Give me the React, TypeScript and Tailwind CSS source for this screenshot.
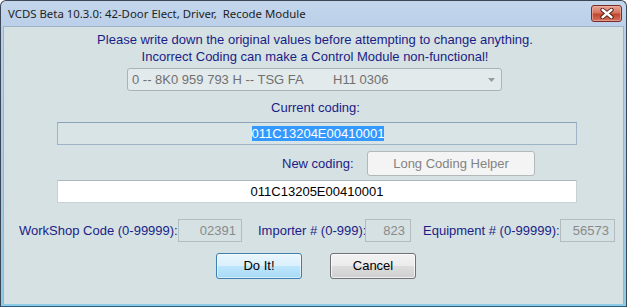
import React from "react";

const ui = { fontFamily: '"Liberation Sans", Arial, sans-serif' };
const title = { fontFamily: '"Noto Sans", "Open Sans", sans-serif' };

function Field({ value, className = "" }: { value: string; className?: string }) {
  return (
    <div
      className={`h-[23px] border border-[#b4bcbf] bg-[#d5e1e3] text-[#8a8a8a] text-[13px] leading-[21px] text-right pr-[5px] ${className}`}
    >
      {value}
    </div>
  );
}

function WinButton({ label, primary }: { label: string; primary?: boolean }) {
  return (
    <button
      className={
        primary
          ? "w-[86px] h-[26px] rounded-[3px] border border-[#3c7fb1] bg-[linear-gradient(#eaf6fd_0%,#d9f0fc_50%,#bee6fd_50%,#a7d9f5_100%)] text-[13px] text-black shadow-[inset_0_0_0_1px_#fff8]"
          : "w-[86px] h-[26px] rounded-[3px] border border-[#707070] bg-[linear-gradient(#f2f2f2_0%,#ebebeb_50%,#dddddd_50%,#cfcfcf_100%)] text-[13px] text-black shadow-[inset_0_0_0_1px_#fffa]"
      }
    >
      {label}
    </button>
  );
}

export default function App() {
  return (
    <div
      className="w-[627px] h-[307px] flex flex-col rounded-t-[6px] border border-[#3b4756] border-b-[#2d5d78] bg-[linear-gradient(#c3d6ec,#b9cfe8_10%,#a9c9e4_60%,#8ccbe6)]"
      style={ui}
    >
      {/* title bar */}
      <div className="h-[25px] flex items-center pl-[7px] pr-[4px] shrink-0">
        <span className="text-[11.4px] text-[#1e1e1e]" style={title}>
          VCDS Beta 10.3.0: 42-Door Elect, Driver,&nbsp; Recode Module
        </span>
        <div className="ml-auto w-[31px] h-[17px] rounded-[3px] border border-[#7a2a26] bg-[linear-gradient(#e8a596,#d5745f_45%,#c2452e_55%,#d27460)] flex items-center justify-center shadow-[inset_0_0_0_1px_#f0b0a0aa]">
          <svg width="14" height="11" viewBox="0 0 14 11">
            <path d="M2.5 1.8 L11.5 9.2 M11.5 1.8 L2.5 9.2" stroke="#4b1610" strokeWidth="4.2" strokeLinecap="round" />
            <path d="M2.5 1.8 L11.5 9.2 M11.5 1.8 L2.5 9.2" stroke="#ffffff" strokeWidth="2.4" strokeLinecap="round" />
          </svg>
        </div>
      </div>

      {/* client area */}
      <div className="flex-1 ml-[2px] mr-[2px] mb-[2px] border border-[#9fb3c2] border-b-0 bg-[#d5e1e3] flex flex-col">
        <div className="pt-[4px] text-center text-[13px] leading-[17px] text-[#1b1d86] pl-[3px]">
          <p>Please write down the original values before attempting to change anything.</p>
          <p>Incorrect Coding can make a Control Module non-functional!</p>
        </div>

        {/* module combo */}
        <div className="mt-[3px] ml-[123px] w-[375px] h-[23px] rounded-[3px] border border-[#a9b3b7] bg-[#e2eaec] flex items-center pl-[4px] pr-[6px] text-[13px] text-[#707070]">
          <span className="inline-block w-[201px]">0 -- 8K0 959 793 H -- TSG FA</span>
          <span>H11 0306</span>
          <svg className="ml-auto" width="7" height="4" viewBox="0 0 7 4">
            <path d="M0 0 H7 L3.5 4 Z" fill="#9a9a9a" />
          </svg>
        </div>

        <div className="mt-[8px] text-center text-[13px] leading-[17px] text-[#1b1d86] pl-[4px]">
          Current coding:
        </div>

        {/* current coding */}
        <div className="mt-[6px] ml-[53px] w-[520px] h-[23px] border border-[#9db4c7] border-t-[#8aa3b8] bg-[#d9e4e6] flex items-center justify-center text-[13px] pl-[2px]">
          <span className="bg-[#3399ff] text-white leading-[15px]">011C13204E00410001</span>
        </div>

        {/* new coding row */}
        <div className="mt-[6px] flex items-center h-[25px]">
          <span className="ml-[278px] w-[73px] text-[13px] text-[#1b1d86] whitespace-nowrap">New coding:</span>
          <div className="ml-[12px] w-[168px] h-[25px] rounded-[3px] border border-[#b3b8bb] bg-[#f4f4f4] flex items-center justify-center text-[13px] text-[#838383]">
            Long Coding Helper
          </div>
        </div>

        <div className="mt-[4px] ml-[53px] w-[520px] h-[23px] border border-[#c8d2d6] border-t-[#abb8c0] bg-white flex items-center justify-center text-[13px] text-black">
          011C13205E00410001
        </div>

        {/* shop codes */}
        <div className="mt-[16px] flex items-center text-[13px] text-[#1b1d86]">
          <span className="ml-[15px] w-[159px] whitespace-nowrap">WorkShop Code (0-99999):</span>
          <Field value="02391" className="w-[64px]" />
          <span className="ml-[16px] w-[107px] whitespace-nowrap">Importer # (0-999):</span>
          <Field value="823" className="w-[46px]" />
          <span className="ml-[12px] w-[137px] whitespace-nowrap">Equipment # (0-99999):</span>
          <Field value="56573" className="w-[55px]" />
        </div>

        <div className="mt-[11px] flex ml-[212px] gap-[28px]">
          <WinButton label="Do It!" primary />
          <WinButton label="Cancel" />
        </div>
      </div>
    </div>
  );
}
